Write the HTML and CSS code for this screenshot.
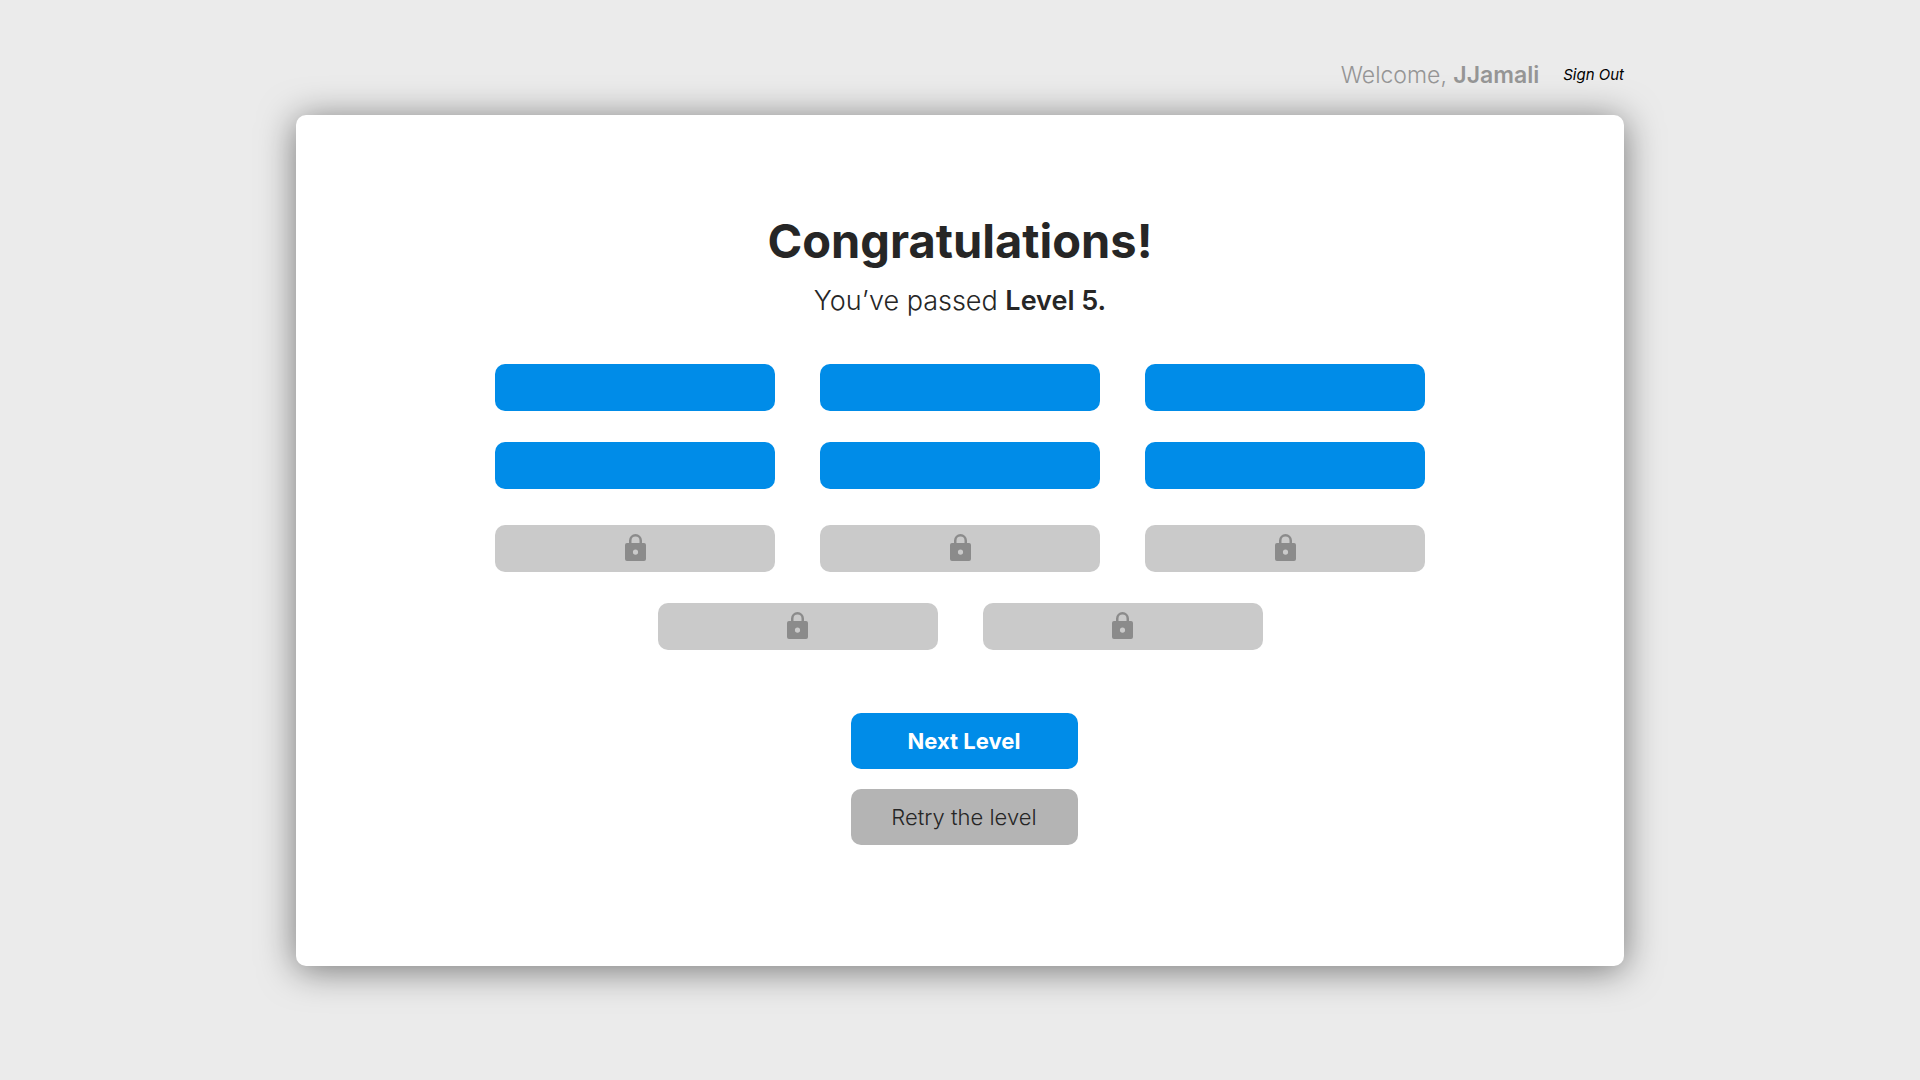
FILE: index.html
```html
<!DOCTYPE html>
<html lang="en">
<head>
<meta charset="utf-8">
<meta name="viewport" content="width=device-width, initial-scale=1">
<title>Congratulations!</title>
<link rel="stylesheet" href="styles.css">
</head>
<body>
<svg class="sprite" aria-hidden="true">
  <symbol id="lock" viewBox="0 0 21 27">
    <path fill-rule="evenodd" d="M4 9V6.500a6.500 6.500 0 0 1 13 0V9h2a2 2 0 0 1 2 2v14a2 2 0 0 1-2 2H2a2 2 0 0 1-2-2V11a2 2 0 0 1 2-2zM6.500 9h8V6.500a4 4 0 0 0-8 0zM10.500 15.500a2.600 2.600 0 1 0 0 5.200a2.600 2.600 0 0 0 0-5.200z"/>
  </symbol>
</svg>
<div class="page">
  <header class="account">
    <p class="welcome">Welcome, <strong>JJamali</strong></p>
    <a class="sign-out" href="#">Sign Out</a>
  </header>
  <main class="card">
    <h1 class="title">Congratulations!</h1>
    <p class="subtitle">You’ve passed <strong>Level 5.</strong></p>
    <div class="levels">
      <button class="level" type="button" aria-label="Level 1"></button>
      <button class="level" type="button" aria-label="Level 2"></button>
      <button class="level" type="button" aria-label="Level 3"></button>
      <button class="level" type="button" aria-label="Level 4"></button>
      <button class="level" type="button" aria-label="Level 5"></button>
      <button class="level" type="button" aria-label="Level 6"></button>
    </div>
    <div class="levels levels-locked">
      <button class="level locked" type="button" disabled aria-label="Level 7, locked"><svg class="lock"><use href="#lock"/></svg></button>
      <button class="level locked" type="button" disabled aria-label="Level 8, locked"><svg class="lock"><use href="#lock"/></svg></button>
      <button class="level locked" type="button" disabled aria-label="Level 9, locked"><svg class="lock"><use href="#lock"/></svg></button>
      <button class="level locked" type="button" disabled aria-label="Level 10, locked"><svg class="lock"><use href="#lock"/></svg></button>
      <button class="level locked" type="button" disabled aria-label="Level 11, locked"><svg class="lock"><use href="#lock"/></svg></button>
    </div>
    <div class="actions">
      <button class="action next" type="button">Next Level</button>
      <button class="action retry" type="button">Retry the level</button>
    </div>
  </main>
</div>
</body>
</html>
```
FILE: styles.css
```css
* {
  box-sizing: border-box;
}

body {
  margin: 0;
  background: #ebebeb;
  color: #262626;
  font-family: Inter, "Liberation Sans", sans-serif;
}

.sprite {
  position: absolute;
  width: 0;
  height: 0;
}

.page {
  max-width: 1376px;
  margin: 0 auto;
  padding: 59px 24px;
}

.account {
  display: flex;
  justify-content: flex-end;
  align-items: center;
  gap: 24px;
  margin-bottom: 24px;
}

.welcome {
  margin: 0;
  color: #959595;
  font-size: 23px;
  line-height: 32px;
  font-weight: 300;
}

.welcome strong {
  font-weight: 600;
}

.sign-out {
  color: #000;
  font-size: 15px;
  line-height: 32px;
  font-style: italic;
  text-decoration: none;
}

.card {
  padding: 96px 48px 121px;
  border-radius: 10px;
  background: #fff;
  box-shadow: 0 4px 36px rgba(0, 0, 0, 0.5);
  text-align: center;
}

.title {
  margin: 0;
  font-size: 47px;
  line-height: 60px;
  font-weight: 700;
}

.subtitle {
  margin: 12px 0 45px;
  font-size: 27px;
  line-height: 36px;
  font-weight: 300;
}

.subtitle strong {
  font-weight: 600;
}

.levels {
  display: flex;
  flex-wrap: wrap;
  justify-content: center;
  gap: 31px 45px;
  max-width: 930px;
  margin: 0 auto;
}

.levels-locked {
  margin-top: 36px;
}

.level {
  display: flex;
  justify-content: center;
  align-items: center;
  width: 280px;
  height: 47px;
  padding: 0;
  border: 0;
  border-radius: 10px;
  background: #008ce8;
}

.locked {
  background: #cacaca;
}

.lock {
  width: 21px;
  height: 27px;
  margin-bottom: 2px;
  fill: #8b8b8b;
}

.actions {
  display: flex;
  flex-direction: column;
  align-items: center;
  gap: 20px;
  margin-top: 63px;
  padding-left: 8px;
}

.action {
  width: 227px;
  height: 56px;
  padding: 0;
  border: 0;
  border-radius: 10px;
  font-family: inherit;
  font-size: 22px;
}

.next {
  background: #008ce8;
  color: #fff;
  font-weight: 700;
}

.retry {
  background: #b4b4b4;
  color: #262626;
  font-weight: 300;
}
```
